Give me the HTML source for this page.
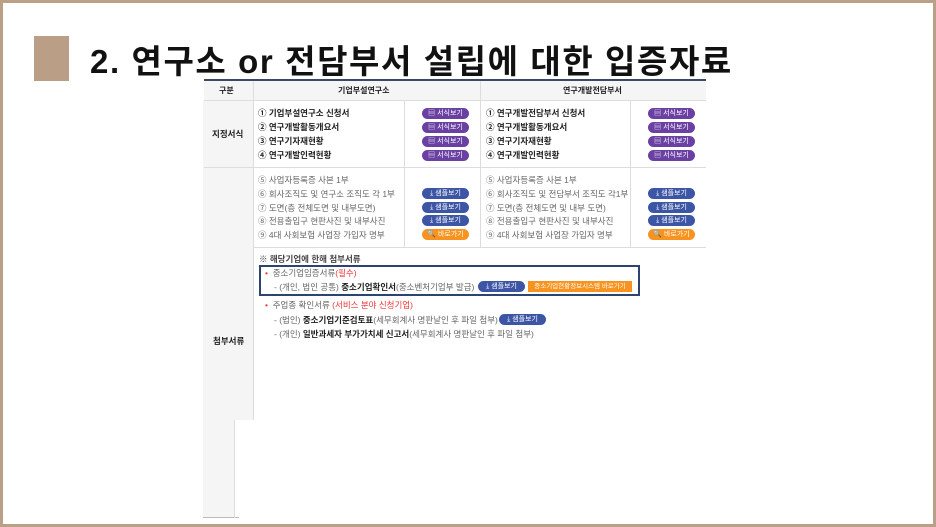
<!DOCTYPE html>
<html><head><meta charset="utf-8"><style>
*{margin:0;padding:0;box-sizing:border-box}
body{width:936px;height:527px;position:relative;background:#fff;overflow:hidden;font-family:"Liberation Sans","Noto Sans CJK KR",sans-serif;color:#333}
.frame{position:absolute;left:0;top:0;width:936px;height:527px;border:3px solid #bba088;border-bottom-width:3px}
.sq{position:absolute;left:34px;top:36px;width:35px;height:45px;background:#bb9e86}
.title{position:absolute;left:90px;top:35px;font-size:33px;font-weight:bold;color:#111;letter-spacing:1.6px;white-space:nowrap}
.a{position:absolute;white-space:nowrap;font-size:8.5px;line-height:11px}
.b{font-weight:bold;color:#222}
.g{color:#666}
.btn{position:absolute;height:11px;width:47px;border-radius:6px;color:#fff;font-size:7px;line-height:11px;text-align:center}
.p{background:#6a40a3}.bl{background:#3d55a5}.o{background:#f7931e}
.hl{position:absolute;background:#ddd}
</style></head><body>
<div class="frame"></div>
<div class="sq"></div>
<div class="title">2. 연구소 or 전담부서 설립에 대한 입증자료</div>

<div style="position:absolute;left:204px;top:79px;width:502px;height:2px;background:#3a4a66"></div>
<div style="position:absolute;left:204px;top:81px;width:502px;height:19px;background:#f5f5f5"></div>
<div style="position:absolute;left:203px;top:100px;width:50px;height:320px;background:#f5f5f5"></div>
<div style="position:absolute;left:203px;top:420px;width:32px;height:98px;background:#f5f5f5"></div>
<div class="hl" style="left:203px;top:517px;width:36px;height:1px;background:#bbb"></div>
<div class="hl" style="left:253px;top:81px;width:1px;height:339px"></div>
<div class="hl" style="left:234px;top:420px;width:1px;height:98px"></div>
<div class="hl" style="left:480px;top:81px;width:1px;height:166px"></div>
<div class="hl" style="left:404px;top:100px;width:1px;height:147px"></div>
<div class="hl" style="left:630px;top:100px;width:1px;height:147px"></div>
<div class="hl" style="left:204px;top:100px;width:502px;height:1px"></div>
<div class="hl" style="left:204px;top:167px;width:502px;height:1px"></div>
<div class="hl" style="left:253px;top:247px;width:453px;height:1px"></div>

<div class="a b" style="left:219px;top:85px;font-size:8px">구분</div>
<div class="a b" style="left:338px;top:85px;font-size:8px">기업부설연구소</div>
<div class="a b" style="left:563px;top:85px;font-size:8px">연구개발전담부서</div>
<div class="a b" style="left:212px;top:129px">지정서식</div>
<div class="a b" style="left:213px;top:336px">첨부서류</div>

<div class="a b" style="left:258px;top:108px">① 기업부설연구소 신청서</div>
<div class="a b" style="left:258px;top:122px">② 연구개발활동개요서</div>
<div class="a b" style="left:258px;top:136px">③ 연구기자재현황</div>
<div class="a b" style="left:258px;top:150px">④ 연구개발인력현황</div>
<div class="btn p" style="left:422px;top:108px">▤ 서식보기</div>
<div class="btn p" style="left:422px;top:122px">▤ 서식보기</div>
<div class="btn p" style="left:422px;top:136px">▤ 서식보기</div>
<div class="btn p" style="left:422px;top:150px">▤ 서식보기</div>

<div class="a b" style="left:486px;top:108px">① 연구개발전담부서 신청서</div>
<div class="a b" style="left:486px;top:122px">② 연구개발활동개요서</div>
<div class="a b" style="left:486px;top:136px">③ 연구기자재현황</div>
<div class="a b" style="left:486px;top:150px">④ 연구개발인력현황</div>
<div class="btn p" style="left:648px;top:108px">▤ 서식보기</div>
<div class="btn p" style="left:648px;top:122px">▤ 서식보기</div>
<div class="btn p" style="left:648px;top:136px">▤ 서식보기</div>
<div class="btn p" style="left:648px;top:150px">▤ 서식보기</div>

<div class="a g" style="left:258px;top:175px">⑤ 사업자등록증 사본 1부</div>
<div class="a g" style="left:258px;top:189px">⑥ 회사조직도 및 연구소 조직도 각 1부</div>
<div class="a g" style="left:258px;top:203px">⑦ 도면(층 전체도면 및 내부도면)</div>
<div class="a g" style="left:258px;top:216px">⑧ 전용출입구 현판사진 및 내부사진</div>
<div class="a g" style="left:258px;top:230px">⑨ 4대 사회보험 사업장 가입자 명부</div>
<div class="btn bl" style="left:422px;top:188px">⤓ 샘플보기</div>
<div class="btn bl" style="left:422px;top:202px">⤓ 샘플보기</div>
<div class="btn bl" style="left:422px;top:215px">⤓ 샘플보기</div>
<div class="btn o" style="left:422px;top:229px">🔍 바로가기</div>

<div class="a g" style="left:486px;top:175px">⑤ 사업자등록증 사본 1부</div>
<div class="a g" style="left:486px;top:189px">⑥ 회사조직도 및 전담부서 조직도 각1부</div>
<div class="a g" style="left:486px;top:203px">⑦ 도면(층 전체도면 및 내부 도면)</div>
<div class="a g" style="left:486px;top:216px">⑧ 전용출입구 현판사진 및 내부사진</div>
<div class="a g" style="left:486px;top:230px">⑨ 4대 사회보험 사업장 가입자 명부</div>
<div class="btn bl" style="left:648px;top:188px">⤓ 샘플보기</div>
<div class="btn bl" style="left:648px;top:202px">⤓ 샘플보기</div>
<div class="btn bl" style="left:648px;top:215px">⤓ 샘플보기</div>
<div class="btn o" style="left:648px;top:229px">🔍 바로가기</div>

<div class="a b" style="left:259px;top:254px;color:#444">※ 해당기업에 한해 첨부서류</div>
<div style="position:absolute;left:259px;top:265px;width:381px;height:31px;border:2px solid #2e4470"></div>
<div class="a g" style="left:265px;top:268px"><span style="color:#e33">•</span>&nbsp; 중소기업임증서류<span style="color:#e33">(필수)</span></div>
<div class="a g" style="left:274px;top:282px">- (개인, 법인 공통) <b style="color:#222">중소기업확인서</b>(중소벤처기업부 발급)</div>
<div class="btn bl" style="left:478px;top:281px;width:47px">⤓ 샘플보기</div>
<div class="btn o" style="left:528px;top:281px;width:104px;border-radius:0;font-size:6.5px">중소기업현황정보시스템 바로가기</div>
<div class="a g" style="left:265px;top:300px"><span style="color:#e33">•</span>&nbsp; 주업종 확인서류 <span style="color:#e33">(서비스 분야 신청기업)</span></div>
<div class="a g" style="left:274px;top:315px">- (법인) <b style="color:#222">중소기업기준검토표</b>(세무회계사 명판날인 후 파일 첨부)</div>
<div class="btn bl" style="left:499px;top:314px">⤓ 샘플보기</div>
<div class="a g" style="left:274px;top:329px">- (개인) <b style="color:#222">일반과세자 부가가치세 신고서</b>(세무회계사 명판날인 후 파일 첨부)</div>
</body></html>
